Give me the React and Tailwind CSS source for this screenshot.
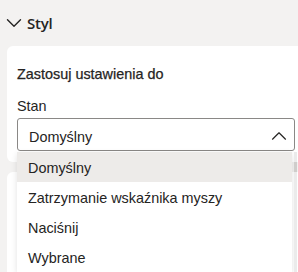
import React from "react";

function ChevronDown() {
  return (
    <svg width="16" height="10" viewBox="0 0 16 10" fill="none" className="block">
      <path d="M1.5 1.8 L8 8.2 L14.5 1.8" stroke="#252423" strokeWidth="1.4" strokeLinecap="round" strokeLinejoin="round" />
    </svg>
  );
}

function ChevronUp() {
  return (
    <svg width="16" height="10" viewBox="0 0 16 10" fill="none" className="block">
      <path d="M1.5 8.2 L8 1.8 L14.5 8.2" stroke="#252423" strokeWidth="1.2" strokeLinecap="round" strokeLinejoin="round" />
    </svg>
  );
}

export default function App() {
  const items = ["Domyślny", "Zatrzymanie wskaźnika myszy", "Naciśnij", "Wybrane"];
  return (
    <div
      className="relative w-[298px] h-[272px] overflow-hidden bg-[#f3f2f1] text-[#252423]"
      style={{ fontFamily: '"Liberation Sans", Arial, sans-serif' }}
    >
      <div className="flex h-[44px] items-center pl-[6px] pt-[2px]">
        <ChevronDown />
        <span
          className="ml-[5px] text-[15px] font-semibold tracking-[-0.2px]"
          style={{ fontFamily: '"Open Sans", sans-serif' }}
        >
          Styl
        </span>
      </div>
      <div className="ml-[7px] mt-[2px] h-[116px] rounded-l-[6px] bg-white pl-[10px] pt-[18px]">
        <div className="text-[14.4px] leading-[20px] [-webkit-text-stroke:0.25px_#252423]">Zastosuj ustawienia do</div>
        <div className="mt-[12px] text-[14.4px] leading-[20px]">Stan</div>
        <div className="mt-[2px] mr-[3px] flex h-[33px] items-center justify-between rounded-[3px] border border-[#8a8886] pl-[11px] pr-[7px]">
          <span className="pt-[4px] text-[14.4px] leading-[20px]">Domyślny</span>
          <div className="pt-[2px]">
            <ChevronUp />
          </div>
        </div>
      </div>
      <div className="ml-[7px] mt-[10px] h-[200px] rounded-l-[6px] bg-white" />
      <div className="absolute left-[17px] top-[152px] right-0 bottom-0 flex">
        <div className="flex-1 bg-white shadow-[0_2px_6px_rgba(0,0,0,0.12)]">
          {items.map((t, i) => (
            <div
              key={t}
              className={
                "flex h-[30px] items-center pl-[11px] pt-[4px] text-[14.4px] " +
                (i === 0 ? "bg-[#edebe9]" : "")
              }
            >
              {t}
            </div>
          ))}
        </div>
        <div className="ml-[2px] mr-[1px] w-[3px] bg-[#ebebeb] pt-[10px]">
          <div className="h-[10px] w-full bg-[#cfcdcb]" />
        </div>
      </div>
    </div>
  );
}
